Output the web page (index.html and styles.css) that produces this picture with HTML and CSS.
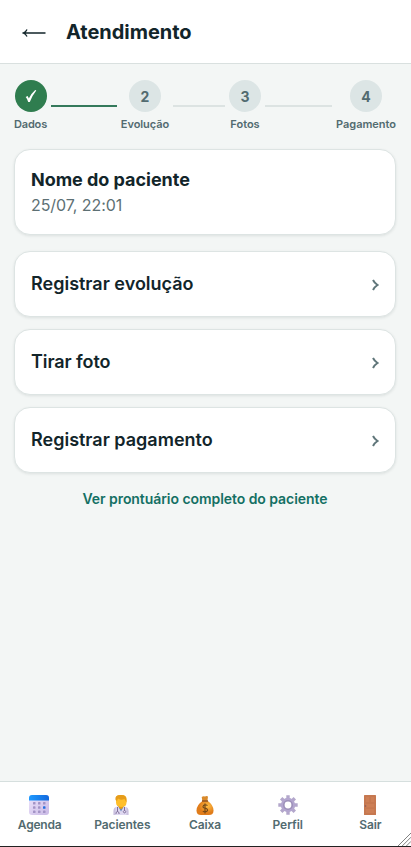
FILE: index.html
```
<!DOCTYPE html>
<html lang="pt-BR">
<head>
<meta charset="utf-8">
<meta name="viewport" content="width=device-width, initial-scale=1">
<title>Atendimento</title>
<link rel="stylesheet" href="styles.css">
</head>
<body>
<div class="app">
  <header class="header">
    <svg class="back" viewBox="0 0 24 14" aria-hidden="true"><path d="M23.500 7H1.500M5 3.400Q4 6 1 7Q4 8 5 10.600" /></svg>
    <h1 class="title">Atendimento</h1>
  </header>
  <main class="main">
    <ol class="steps">
      <li class="step step-1 done"><span class="dot"><svg class="check" viewBox="0 0 12 14" aria-hidden="true"><path d="M.7 8.100 2.600 7Q3.400 8 3.800 9.500 6.300 4.400 10.200 1L11.300 1.500Q7.200 6.600 4.800 13L3.200 13Q2.300 9.900.7 8.100Z"/></svg></span><span class="label">Dados</span></li>
      <li class="line line-1 done"></li>
      <li class="step step-2"><span class="dot">2</span><span class="label">Evolução</span></li>
      <li class="line line-2"></li>
      <li class="step step-3"><span class="dot">3</span><span class="label">Fotos</span></li>
      <li class="line line-3"></li>
      <li class="step step-4"><span class="dot">4</span><span class="label">Pagamento</span></li>
    </ol>
    <section class="card patient">
      <h2 class="name">Nome do paciente</h2>
      <p class="date">25/07, 22:01</p>
    </section>
    <div class="actions">
      <a class="card action"><span>Registrar evolução</span><svg class="chev" viewBox="0 0 7 12"><path d="M1 1Q2.500 4 5.500 6Q2.500 8 1 11"/></svg></a>
      <a class="card action"><span class="photo">Tirar foto</span><svg class="chev" viewBox="0 0 7 12"><path d="M1 1Q2.500 4 5.500 6Q2.500 8 1 11"/></svg></a>
      <a class="card action"><span>Registrar pagamento</span><svg class="chev" viewBox="0 0 7 12"><path d="M1 1Q2.500 4 5.500 6Q2.500 8 1 11"/></svg></a>
    </div>
    <a class="record">Ver prontuário completo do paciente</a>
  </main>
  <nav class="nav">
    <a class="tab agenda">
      <svg class="icon" viewBox="0 0 22 22">
        <defs><linearGradient id="cal" x2="1" y2="1"><stop stop-color="#eee5fc"/><stop offset="1" stop-color="#c9b9e5"/></linearGradient><linearGradient id="top" x2="1"><stop stop-color="#1f9bff"/><stop offset="1" stop-color="#1268dd"/></linearGradient></defs>
        <rect x="1" y="1" width="20" height="20" rx="3" fill="url(#cal)"/><path d="M1 6.500V4a3 3 0 0 1 3-3h14a3 3 0 0 1 3 3v2.500Z" fill="url(#top)"/>
        <g fill="#a394c6"><rect x="5" y="8" width="2.500" height="2.500" rx=".6"/><rect x="10" y="8" width="2.500" height="2.500" rx=".6"/><rect x="15" y="8" width="2.500" height="2.500" rx=".6"/><rect x="5" y="12.300" width="2.500" height="2.500" rx=".6"/><rect x="10" y="12.300" width="2.500" height="2.500" rx=".6"/><rect x="15" y="12.300" width="2.500" height="2.500" rx=".6" fill="#246fe0"/><rect x="5" y="16.600" width="2.500" height="2.500" rx=".6"/><rect x="10" y="16.600" width="2.500" height="2.500" rx=".6"/><rect x="15" y="16.600" width="2.500" height="2.500" rx=".6"/></g>
      </svg>
      <span class="label">Agenda</span></a>
    <a class="tab pacientes">
      <svg class="icon" viewBox="0 0 22 22">
        <path d="M3.500 21v-4q0-4 4-4.500h7q4 .5 4 4.500v4Z" fill="#dfd8f1"/><path d="m8 12 3 5.500 3-5.500Z" fill="#6387bb"/><path d="M9 10h4v3.500l-2 2-2-2Z" fill="#e79c16"/>
        <path d="M6 5Q5.500 1 10.500 1q6-.5 6 4v3.500q0 4.500-5.200 4.500T6 8.500Z" fill="#ffbf2b"/><path d="M5.500 6Q4.500 1 10.500 1 16.500.500 16.500 6v2.500l-2-3.500Q10 6.500 8 4.500L7 7Z" fill="#e69c1a"/>
        <path d="M7.500 13v4.500M14.500 13v3.500M6 20v-1.500q1.500-2 3 0V20M14.500 16.500a1.200 1.200 0 1 0 .1 0" fill="none" stroke="#74638f" stroke-width=".9"/><path d="M3.500 21v-4q0-3 2-4v8ZM18.500 21v-4q0-3-2-4v8Z" fill="#bdb3d4" opacity=".6"/>
      </svg>
      <span class="label">Pacientes</span></a>
    <a class="tab caixa">
      <svg class="icon" viewBox="0 0 22 22">
        <defs><radialGradient id="bag" cx=".65" cy=".35"><stop stop-color="#ffbd43"/><stop offset="1" stop-color="#e07c1a"/></radialGradient></defs>
        <path d="M8.500 8 7.700 3Q9.500 1.500 11 2.600q1.500-1.200 3 0L13.300 8Z" fill="#d98a2c"/><path d="M8.500 7h5.300Q19.500 11 19.500 16.500 19.500 21 15 21H7q-4.500 0-4.500-4.500Q2.500 11 8.500 7Z" fill="url(#bag)"/><path d="M8 7h6" stroke="#8d5022" stroke-width="1.400"/>
        <path d="M13.500 11.500Q11 10 9.500 11.500 8 13.500 11 14.200t2.500 2.500Q12 18.700 8.800 17.300M11 9.500v10" fill="none" stroke="#744817" stroke-width="1.200"/>
      </svg>
      <span class="label">Caixa</span></a>
    <a class="tab perfil">
      <svg class="icon" viewBox="0 0 22 22">
        <g stroke="#b3a7cb" stroke-width="3.400"><path d="M11 1.300v19.400M1.300 11h19.400M4.200 4.200l13.600 13.600M17.800 4.200 4.200 17.800"/></g><circle cx="11" cy="11" r="7.200" fill="#b3a6cf"/><circle cx="11" cy="11" r="5" fill="#9d90b9"/><circle cx="11" cy="11" r="3.400" fill="#fff"/>
      </svg>
      <span class="label">Perfil</span></a>
    <a class="tab sair">
      <svg class="icon" viewBox="0 0 22 22"><rect x="5" y="1" width="12" height="20" rx=".5" fill="#c67850"/><path d="M6.800 3h3.400v5H6.800ZM11.800 3h3.400v5h-3.400ZM6.800 10h8.400v3.300H6.800ZM6.800 15h8.400v4H6.800Z" fill="#cd7f56"/><circle cx="6.500" cy="12" r=".9" fill="#986359"/></svg>
      <span class="label">Sair</span></a>
    <svg class="grip" viewBox="0 0 14 14"><path d="M0 14 14 0M4.500 14 14 4.500M9 14l5-5" /></svg>
  </nav>
</div>
</body>
</html>
```
FILE: styles.css
```
* { box-sizing: border-box; margin: 0; padding: 0; }
body { font-family: Inter, "Liberation Sans", sans-serif; color: #12252a; background: #f3f6f5; }
.app { height: 847px; display: flex; flex-direction: column; overflow: hidden; border-bottom: 1px solid #222; }
.header { height: 64px; flex: none; display: flex; align-items: center; gap: 20px; padding-left: 22px; background: #fff; border-bottom: 1px solid #d9e0df; }
.back { width: 24px; height: 14px; margin-top: 3px; fill: none; stroke: #12252a; stroke-width: 1.3; }
.title { font-size: 20px; line-height: 28px; font-weight: 700; letter-spacing: -.03px; }
.main { flex: 1; display: flex; flex-direction: column; padding: 16px 15px 0 14px; }
.steps { display: flex; list-style: none; height: 52px; gap: 4px; }
.step { display: flex; flex-direction: column; align-items: center; gap: 4px; flex: none; }
.step-1 { width: 33px; }
.step-2 { width: 48px; }
.step-3 { width: 32px; }
.step-4 { width: 60px; }
.step-1 .label { letter-spacing: -.15px; }
.step-2 .label { letter-spacing: -.05px; }
.dot { width: 32px; height: 32px; border-radius: 50%; display: flex; align-items: center; justify-content: center; background: #dce5e5; color: #526b70; font-size: 14px; font-weight: 700; }
.done .dot { background: #2f7d4f; }
.check { width: 12px; height: 14px; fill: #fff; }
.label { font-size: 11px; line-height: 16px; font-weight: 600; color: #526b70; white-space: nowrap; }
.line { height: 2px; margin-top: 25px; background: #dce3e2; }
.line-1 { flex: 66; }
.line-2 { flex: 52; }
.line-3 { flex: 67; }
.line.done { background: #34795b; }
.card { background: #fff; border: 1px solid #dde4e3; border-radius: 16px; box-shadow: 0 1px 3px rgba(18, 37, 42, .1); }
.patient { height: 86px; margin-top: 17px; padding: 17px 16px; }
.name { font-size: 18px; line-height: 26px; font-weight: 700; letter-spacing: -.03px; }
.date { font-size: 16px; line-height: 24px; letter-spacing: -.06px; color: #5d7074; }
.actions { display: flex; flex-direction: column; gap: 12px; margin-top: 16px; }
.action { height: 66px; display: flex; align-items: center; justify-content: space-between; padding: 0 16px; font-size: 18px; line-height: 24px; font-weight: 600; }
.action span { margin-top: -1px; }
.photo { letter-spacing: -.08px; }
.chev { width: 7px; height: 12px; margin-top: 2px; fill: none; stroke: #60767a; stroke-width: 2; }
.record { margin-top: 15px; text-align: center; font-size: 14px; line-height: 22px; font-weight: 600; letter-spacing: -.06px; color: #147064; }
.nav { position: relative; height: 65px; flex: none; display: grid; grid-template-columns: repeat(5, 82.7px); justify-content: center; padding-right: 1px; background: #fff; border-top: 1px solid #d6dfde; }
.tab { display: flex; flex-direction: column; align-items: center; padding-top: 12px; }
.icon { width: 22px; height: 22px; }
.agenda .icon, .pacientes .icon { margin-right: 2px; }
.tab .label { font-size: 12px; line-height: 18px; letter-spacing: -.08px; }
.tab.agenda .label { letter-spacing: -.22px; }
.grip { position: absolute; right: 0; bottom: 0; width: 13px; height: 13px; fill: none; stroke: #777; stroke-width: 1; }
```
